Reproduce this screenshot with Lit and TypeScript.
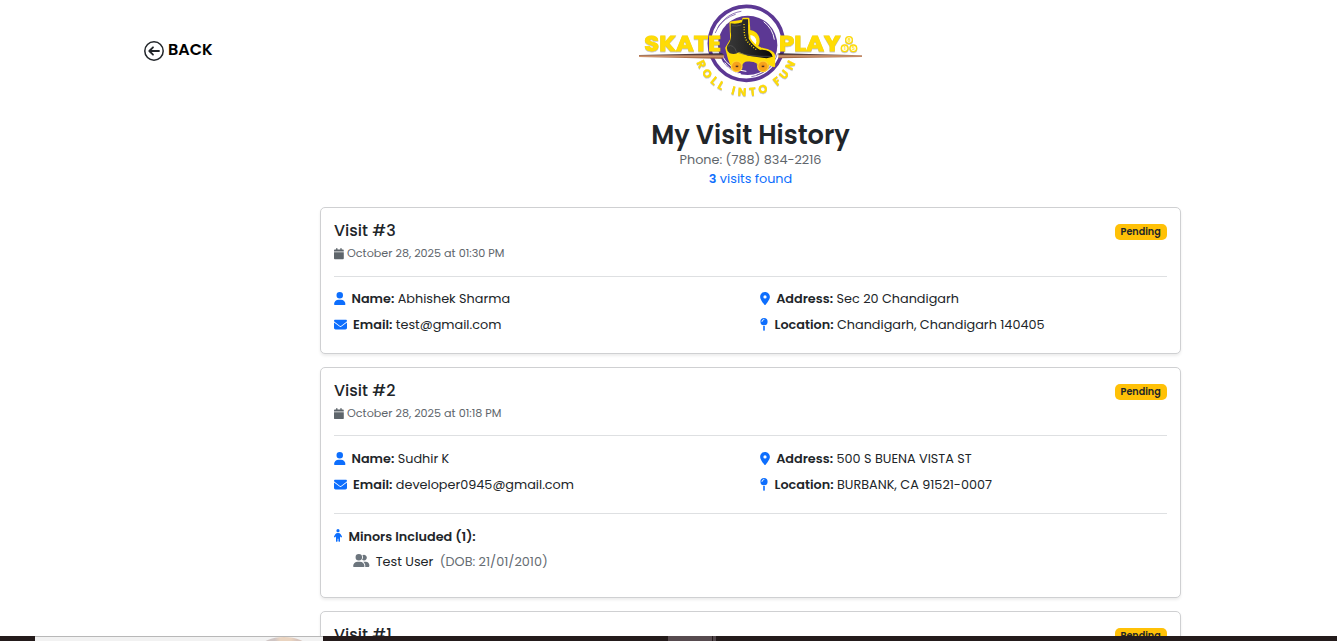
import { LitElement, html, css, svg, nothing } from "lit";
import { customElement, property } from "lit/decorators.js";

const glyphs: Record<string, [number, number, unknown]> = {
  user: [448, 512, svg`<path d="M224 256A128 128 0 1 0 224 0a128 128 0 1 0 0 256zm-45.700 48C79.800 304 0 383.800 0 482.300 0 498.700 13.300 512 29.700 512h388.600c16.400 0 29.700-13.300 29.700-29.700 0-98.500-79.800-178.300-178.300-178.300z"/>`],
  mail: [512, 512, svg`<path d="M48 64C21.500 64 0 85.500 0 112c0 15.100 7.100 29.300 19.200 38.400l217.600 163.200c11.400 8.500 27 8.500 38.400 0l217.600-163.200c12.100-9.100 19.200-23.300 19.200-38.400 0-26.500-21.500-48-48-48zM0 176v208c0 35.300 28.700 64 64 64h384c35.300 0 64-28.700 64-64V176L294.400 339.200a64 64 0 0 1-76.800 0z"/>`],
  marker: [384, 512, svg`<path fill-rule="evenodd" d="M215.700 499.200C267 435 384 279.400 384 192 384 86 298 0 192 0S0 86 0 192c0 87.400 117 243 168.300 307.200 12.300 15.300 35.100 15.300 47.400 0zM192 128a64 64 0 1 1 0 128 64 64 0 1 1 0-128z"/>`],
  pin: [320, 512, svg`<path fill-rule="evenodd" d="M16 144a144 144 0 1 1 288 0 144 144 0 1 1-288 0zM160 80c8.800 0 16-7.200 16-16s-7.200-16-16-16c-53 0-96 43-96 96 0 8.800 7.200 16 16 16s16-7.200 16-16c0-35.300 28.700-64 64-64zM128 480V317a180 180 0 0 0 64 0v163c0 17.700-14.300 32-32 32s-32-14.300-32-32z"/>`],
  calendar: [448, 512, svg`<path d="M96 32v32H48C21.500 64 0 85.500 0 112v48h448v-48c0-26.500-21.500-48-48-48h-48V32a32 32 0 0 0-64 0v32H160V32a32 32 0 0 0-64 0zM448 192H0v272c0 26.500 21.500 48 48 48h352c26.500 0 48-21.500 48-48z"/>`],
  child: [320, 512, svg`<path d="M96 64a64 64 0 1 1 128 0 64 64 0 1 1-128 0zm48 320v96a32 32 0 0 1-64 0V287l-21 32a32 32 0 0 1-54-34l48-76a112 112 0 0 1 95-49h24a112 112 0 0 1 95 49l48 76a32 32 0 0 1-54 34l-21-32v193a32 32 0 0 1-64 0v-96z"/>`],
  users: [640, 512, svg`<path d="M96 128a128 128 0 1 1 256 0 128 128 0 1 1-256 0zM0 482c0-98 80-178 178-178h92c98 0 178 80 178 178 0 17-13 30-30 30H30c-17 0-30-13-30-30zm609 30H471c6-9 9-20 9-32 0-68-30-128-78-170l21-6h79c76 0 138 62 138 137 0 40-14 71-31 71zM432 256c-31 0-59-13-79-33a159 159 0 0 0 13-173 112 112 0 1 1 66 206z"/>`],
};

const icon = (name: string, cls: string) => {
  const [w, h, shape] = glyphs[name];
  return html`<svg class="icon ${cls}" viewBox="0 0 ${w} ${h}" fill="currentColor">${shape}</svg>`;
};

interface Visit {
  title: string; date: string; name: string; email: string; address: string; location: string;
  minor?: { name: string; dob: string };
}

const visits: Visit[] = [
  {
    title: "Visit #3", date: "October 28, 2025 at 01:30 PM",
    name: "Abhishek Sharma", email: "test@gmail.com",
    address: "Sec 20 Chandigarh", location: "Chandigarh, Chandigarh 140405",
  },
  {
    title: "Visit #2", date: "October 28, 2025 at 01:18 PM",
    name: "Sudhir K", email: "developer0945@gmail.com",
    address: "500 S BUENA VISTA ST", location: "BURBANK, CA 91521-0007",
    minor: { name: "Test User", dob: "(DOB: 21/01/2010)" },
  },
  {
    title: "Visit #1", date: "October 28, 2025 at 01:10 PM",
    name: "Sudhir K", email: "developer0945@gmail.com",
    address: "500 S BUENA VISTA ST", location: "BURBANK, CA 91521-0007",
  },
];

@customElement("visit-card")
class VisitCard extends LitElement {
  static styles = css`
    :host { display: block; }
    .card {
      box-sizing: border-box; border: 1px solid #cfd0d2; border-radius: 5px; background: #fff;
      box-shadow: 0 2px 3px rgba(0, 0, 0, 0.075); padding: 12px 13px 14.6px;
    }
    .icon { display: block; flex: none; margin-bottom: 1.5px; }
    .head { display: flex; justify-content: space-between; height: 55.5px; border-bottom: 1px solid #dee0e2; }
    .title { font-size: 16px; font-weight: 500; line-height: 20px; height: 23px; padding-top: 1px; box-sizing: border-box; }
    .date { display: flex; align-items: center; gap: 3.2px; color: #5e656b; font-size: 11.2px; line-height: 21.8px; }
    .cal { width: 9.8px; height: 11.2px; margin-bottom: 0.6px; }
    .badge {
      box-sizing: border-box; width: 52px; height: 16px; margin-top: 4px; padding-left: 5.6px; border-radius: 5px;
      background: #ffc107; font-size: 9.6px; font-weight: 600; line-height: 16px; white-space: nowrap;
    }
    .grid { display: grid; grid-template-columns: 426.2px 1fr; grid-auto-rows: 26px; padding-top: 9.5px; }
    .row { display: flex; align-items: center; height: 26px; line-height: 26px; white-space: pre; }
    .label { font-weight: 600; }
    .blue { color: #0d6efd; }
    .user { width: 11.500px; height: 13px; margin-right: 6px; }
    .mail { width: 13px; height: 13px; margin-right: 6px; }
    .marker { width: 10px; height: 13px; margin-right: 6px; }
    .pin { width: 8px; height: 13px; margin-right: 6.4px; }
    .minors { border-top: 1px solid #dee0e2; margin-top: 15.5px; padding: 9.4px 0 9.1px; }
    .child { width: 8px; height: 13px; margin-right: 6.4px; }
    .person { display: flex; align-items: center; height: 24px; line-height: 24px; padding-left: 19px; }
    .users { width: 16.500px; height: 13px; margin-right: 6.2px; color: #6c757d; }
    .dob { color: #656c72; margin-left: 6.4px; }
  `;
  @property({ attribute: false }) visit!: Visit;

  field(name: string, label: string, value: string) {
    return html`<div class="row">${icon(name, `blue ${name}`)}<span><span class="label">${label}</span> ${value}</span></div>`;
  }

  render() {
    const v = this.visit;
    return html`<article class="card">
      <div class="head">
        <div>
          <div class="title">${v.title}</div>
          <div class="date">${icon("calendar", "cal")}<span>${v.date}</span></div>
        </div>
        <div class="badge">Pending</div>
      </div>
      <div class="grid">
        ${this.field("user", "Name:", v.name)}
        ${this.field("marker", "Address:", v.address)}
        ${this.field("mail", "Email:", v.email)}
        ${this.field("pin", "Location:", v.location)}
      </div>
      ${v.minor
        ? html`<div class="minors">
            <div class="row">${icon("child", "blue child")}<span class="label">Minors Included (1):</span></div>
            <div class="person">${icon("users", "users")}<span>${v.minor.name}</span><span class="dob">${v.minor.dob}</span></div>
          </div>`
        : nothing}
    </article>`;
  }
}

@customElement("brand-logo")
class BrandLogo extends LitElement {
  static styles = css`
    :host { display: block; margin-right: 1px; }
    .logo { display: block; width: 240px; height: 105px; }
    .word { font: 700 65px "Poppins", "Inter", sans-serif; fill: #ffdc05; stroke: #ffdc05; stroke-width: 2.5; }
    .motto { font: 700 34px "Poppins", "Inter", sans-serif; fill: #ffdc05; stroke: #ffdc05; stroke-width: 0.5; }
    .lift { filter: drop-shadow(0 2px 2px rgba(60, 60, 90, 0.4)); }
    .ball { font: 700 13px "Inter", sans-serif; fill: #ffdc05; }
  `;
  render() {
    return html`<svg class="logo" viewBox="0 0 720 315">
      <defs>
        <linearGradient id="cue" x2="0" y2="1"><stop offset="0" stop-color="#1f1a30"/><stop offset=".3" stop-color="#6b4a40"/><stop offset=".5" stop-color="#dca078"/><stop offset="1" stop-color="#8d5030"/></linearGradient>
        <linearGradient id="boot" x2="1"><stop offset="0" stop-color="#393939"/><stop offset=".5" stop-color="#242424"/><stop offset="1" stop-color="#080808"/></linearGradient>
        <path id="arc" d="M187 127A161 161 0 0 0 509 127"/>
      </defs>
      <circle cx="349" cy="130" r="111" fill="#fff" stroke="#5c3894" stroke-width="11"/>
      <circle cx="353" cy="136" r="89" fill="#5c3894"/>
      <g fill="none" stroke="#5c3894" stroke-linecap="round" stroke-width="2">
        <path d="M256 98A98 98 0 0 1 333 34M264 82A98 98 0 0 1 316 43M442 162A98 98 0 0 1 365 230M433 188A98 98 0 0 1 381 225"/>
      </g>
      <g fill="none" stroke="#fff" stroke-width="3"><path d="M401 65A82 82 0 0 1 433 119M275 164A84 84 0 0 0 349 214M284 188A84 84 0 0 0 333 222"/></g>
      <circle cx="357" cy="122" r="32" fill="#ffdc05"/><circle cx="360" cy="124" r="19" fill="#fff"/>
      <g class="lift">
        <text class="word" x="43" y="154" textLength="230" lengthAdjust="spacingAndGlyphs">SKATE</text>
        <text class="word" x="447" y="154" textLength="184" lengthAdjust="spacingAndGlyphs">PLAY</text>
        <text class="motto" textLength="380" lengthAdjust="spacing"><textPath href="#arc" startOffset="62" textLength="380">ROLL INTO FUN</textPath></text>
        <g fill="#fffbe0" stroke="#ffdc05" stroke-width="4"><circle cx="657" cy="120" r="10"/><circle cx="644" cy="145" r="10"/><circle cx="670" cy="145" r="10"/></g>
      </g>
      <text class="ball" x="653" y="125">8</text><text class="ball" x="641" y="150">1</text><text class="ball" x="666" y="150">5</text>
      <path fill="url(#cue)" d="M27 165L272 160Q282 161 282 168Q282 176 272 176L27 171z"/>
      <path fill="url(#cue)" d="M445 160L696 166V171L445 175z"/>
      <path fill="#ffdc05" stroke="#ffdc05" stroke-width="7" stroke-linejoin="round" d="M302 68L338 63L340 57H355L357 83L358 116Q370 136 392 146Q430 151 432 167V198L415 190L398 184L380 190L372 183L345 181L338 190L321 184L304 193L297 175L289 144L304 119z"/>
      <path fill="url(#boot)" d="M302 70Q321 73 336 67L338 58H354L355 98L359 118Q370 137 392 149Q423 148 428 170L410 175L354 167L326 156Q317 166 299 160Q287 150 292 137Q307 118 302 96z"/>
      <path fill="none" stroke="#5b5b5b" stroke-width="2" d="M306 77Q320 80 334 75M292 139Q312 130 320 158M323 157Q357 171 425 169"/>
      <path fill="none" stroke="#ffdc05" stroke-width="4" stroke-dasharray="3 5" d="M342 72L343 101L347 118Q359 135 382 151"/>
      <path fill="none" stroke="#ffdc05" stroke-width="4" d="M357 75L358 115Q370 136 392 148"/>
      <path fill="#5c3894" d="M340 189Q360 180 380 190V197H340z"/>
      <g fill="#f7a31c" stroke="#ffd42a" stroke-width="4"><circle cx="320" cy="199" r="16"/><circle cx="399" cy="199" r="16"/></g>
      <g fill="#29231b" stroke="#e5891b" stroke-width="3"><circle cx="321" cy="199" r="4"/><circle cx="399" cy="199" r="4"/></g>
    </svg>`;
  }
}

@customElement("app-root")
class AppRoot extends LitElement {
  static styles = css`
    :host {
      display: block; position: relative; box-sizing: border-box; height: 641px; overflow: hidden; background: #fff;
      color: #212529; font: 400 12.8px/19.2px "Poppins", "Inter", sans-serif;
    }
    .page { display: grid; grid-template-columns: 320px 861px; }
    .back { display: flex; align-items: center; align-self: start; gap: 4px; height: 20px; margin: 41px 0 0 144px; color: #000; font-size: 16px; font-weight: 600; }
    .arrow { display: block; width: 20px; height: 20px; }
    .back span { margin-top: -3px; }
    .top { display: flex; flex-direction: column; align-items: center; height: 207.4px; }
    .heading { margin: 14px 0 0; font-size: 25.6px; line-height: 32px; height: 31px; font-weight: 600; }
    .phone { color: #5f666c; }
    .found { color: #0d6efd; }
    .found b { font-weight: 600; }
    .list { display: flex; flex-direction: column; gap: 12.8px; }
    .strip { position: absolute; left: 0; right: 0; bottom: 0; height: 5px; display: flex; background: #241b1b; }
    .gap { width: 35px; }
    .search { position: relative; width: 288px; height: 4px; border-top: 1px solid #b8b8b8; background: #f2f2f2; overflow: hidden; }
    .disc { position: absolute; left: 226px; top: 0; width: 46px; height: 20px; border-radius: 50%; background: linear-gradient(90deg, #cfc5c4 0 30%, #ead4c0 42% 65%, #d8c5bd 78%); }
    .active { width: 44px; margin-left: 345px; background: #574b4f; }
    .edge { width: 3px; margin-left: 1px; background: #51464a; }
  `;
  render() {
    return html`
      <main class="page">
        <div class="back">
          <svg class="arrow" viewBox="0 0 20 20" fill="none" stroke="#212529" stroke-width="1.500" stroke-linecap="round" stroke-linejoin="round">
            <circle cx="10" cy="10" r="9.200"/><path stroke-width="1.800" d="M15 10H5.500M9 6.300L5.300 10L9 13.700"/>
          </svg>
          <span>BACK</span>
        </div>
        <section>
          <header class="top">
            <brand-logo></brand-logo>
            <h1 class="heading">My Visit History</h1>
            <div class="phone">Phone: (788) 834-2216</div>
            <div class="found"><b>3</b> visits found</div>
          </header>
          <div class="list">${visits.map((v) => html`<visit-card .visit=${v}></visit-card>`)}</div>
        </section>
      </main>
      <div class="strip">
        <div class="gap"></div>
        <div class="search"><div class="disc"></div></div>
        <div class="active"></div>
        <div class="edge"></div>
      </div>
    `;
  }
}
